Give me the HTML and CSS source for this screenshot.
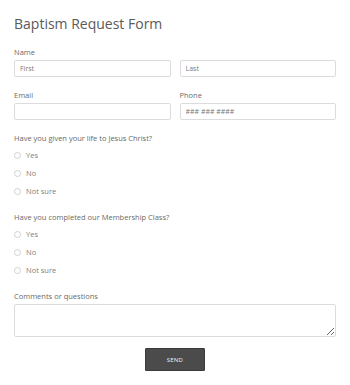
FILE: index.html
```html
<!DOCTYPE html>
<html lang="en">
<head>
  <meta charset="UTF-8" />
  <meta name="viewport" content="width=device-width, initial-scale=1.0"/>
  <title>Baptism Request Form</title>
  <link rel="stylesheet" href="styles.css">
</head>
<body>
  <form class="form">
    <h1 class="title">Baptism Request Form</h1>

    <div class="field">
      <label class="field-label">Name</label>
      <div class="row">
        <input type="text" class="text-input" placeholder="First" />
        <input type="text" class="text-input" placeholder="Last" />
      </div>
    </div>

    <div class="row">
      <div class="field">
        <label class="field-label">Email</label>
        <input type="email" class="text-input" />
      </div>
      <div class="field">
        <label class="field-label">Phone</label>
        <input type="tel" class="text-input" placeholder="### ### ####" />
      </div>
    </div>

    <div class="field choices">
      <label class="field-label">Have you given your life to Jesus Christ?</label>
      <label class="choice"><input type="radio" name="life" /><span>Yes</span></label>
      <label class="choice"><input type="radio" name="life" /><span>No</span></label>
      <label class="choice"><input type="radio" name="life" /><span>Not sure</span></label>
    </div>

    <div class="field choices">
      <label class="field-label">Have you completed our Membership Class?</label>
      <label class="choice"><input type="radio" name="class" /><span>Yes</span></label>
      <label class="choice"><input type="radio" name="class" /><span>No</span></label>
      <label class="choice"><input type="radio" name="class" /><span>Not sure</span></label>
    </div>

    <div class="field">
      <label class="field-label">Comments or questions</label>
      <textarea class="text-area"></textarea>
    </div>

    <div class="actions">
      <button type="submit" class="send-button">SEND</button>
    </div>
  </form>
</body>
</html>
```

FILE: styles.css
```css
body {
  margin: 0;
  font-family: "Open Sans", Arial, sans-serif;
  background-color: #fff;
  color: #666;
}
.form {
  padding: 14px 14px 0 14px;
}
.title {
  margin: 0 0 14px 0;
  font-size: 14px;
  line-height: 19px;
  font-weight: 400;
  color: #5a5a5a;
}
.field {
  display: flex;
  flex-direction: column;
  margin-bottom: 13px;
}
.row {
  display: flex;
  gap: 9px;
}
.row > .field,
.row > .text-input {
  flex: 1;
  min-width: 0;
}
.field-label {
  font-size: 7.5px;
  line-height: 10px;
  margin-bottom: 3px;
  color: #6a6a6a;
}
.text-input {
  box-sizing: border-box;
  height: 17px;
  border: 1px solid #dcdcdc;
  border-radius: 2px;
  padding: 0 5px;
  font-family: inherit;
  font-size: 7px;
  color: #555;
  outline: none;
}
.text-input::placeholder {
  color: #7a7a7a;
}
.choices {
  margin-bottom: 12px;
}
.choice {
  display: flex;
  align-items: center;
  height: 18px;
  font-size: 7.5px;
  color: #808080;
}
.choice input {
  appearance: none;
  box-sizing: border-box;
  width: 7px;
  height: 7px;
  margin: 0 5px 0 0;
  border: 1px solid #d0d0d0;
  border-radius: 50%;
  background: #fff;
}
.choices + .field {
  margin-top: 3px;
}
.text-area {
  box-sizing: border-box;
  height: 33px;
  border: 1px solid #dcdcdc;
  border-radius: 2px;
  font-family: inherit;
  font-size: 7px;
  outline: none;
}
.actions {
  display: flex;
  justify-content: center;
  margin-top: -2px;
}
.send-button {
  width: 60px;
  height: 23px;
  background-color: #4b4b4b;
  border: 1px solid #3a3a3a;
  border-radius: 1px;
  color: #f2f2f2;
  font-family: inherit;
  font-size: 6px;
  letter-spacing: 0.2px;
  cursor: pointer;
}
```
